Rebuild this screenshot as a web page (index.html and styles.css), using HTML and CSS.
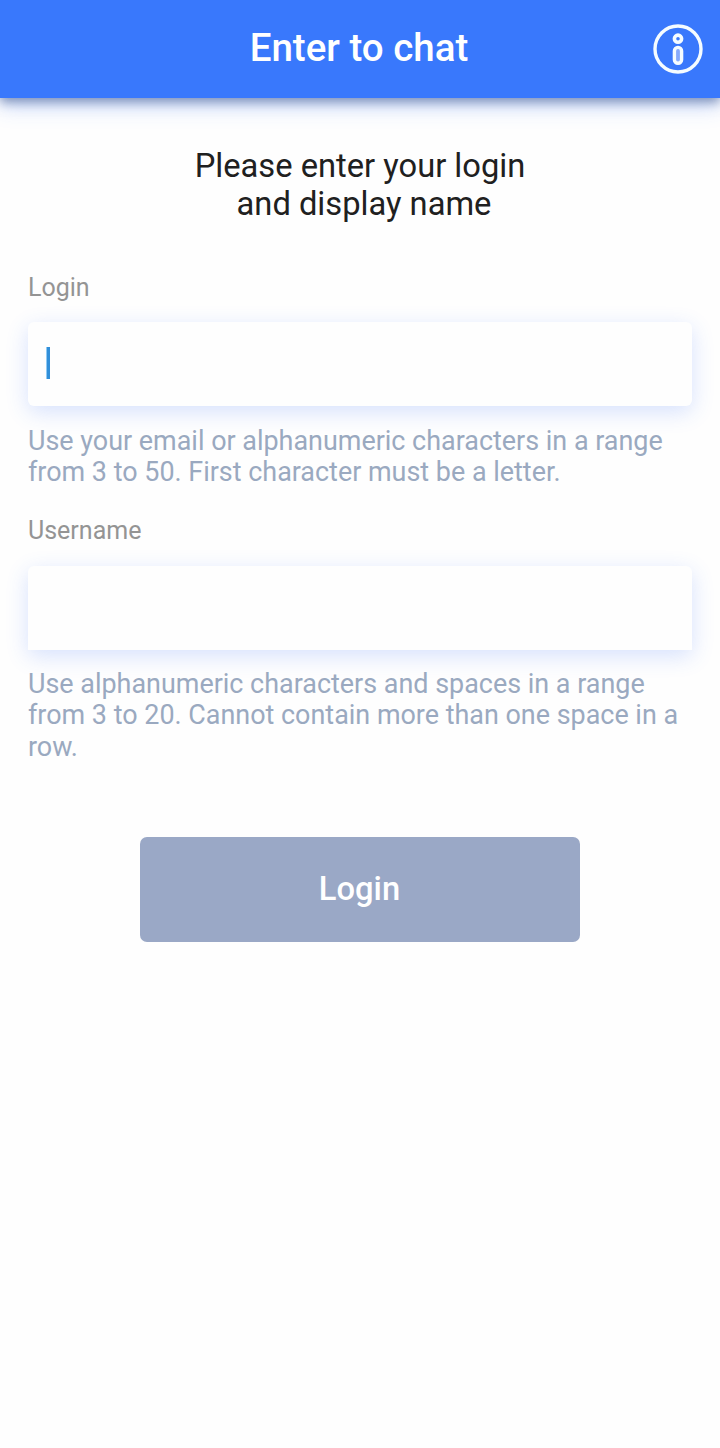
FILE: index.html
```html
<!DOCTYPE html>
<html lang="en">
<head>
<meta charset="utf-8">
<title>Enter to chat</title>
<link rel="stylesheet" href="styles.css">
</head>
<body>
<header class="bar">
  <h1 class="bar-title">Enter to chat</h1>
  <button class="info" aria-label="Info">
    <svg width="50" height="50" viewBox="0 0 50 50" fill="none" stroke="#f5fcff">
      <circle cx="25" cy="25" r="23" stroke-width="3.4"/>
      <circle cx="25" cy="14.7" r="3.6" stroke-width="3.6"/>
      <rect x="21.4" y="23.4" width="7.2" height="15.8" rx="3.5" stroke-width="3.4" fill="#86aafc"/>
    </svg>
  </button>
</header>
<main class="form">
  <p class="intro"><span>Please enter your login</span><span class="second">and display name</span></p>
  <div class="label">Login</div>
  <div class="field rounded"><span class="caret"></span></div>
  <p class="hint">Use your email or alphanumeric characters in a range<br>from 3 to 50. First character must be a letter.</p>
  <div class="label label-username">Username</div>
  <div class="field"></div>
  <p class="hint hint-username">Use alphanumeric characters and spaces in a range<br>from 3 to 20. Cannot contain more than one space in a<br>row.</p>
  <button class="submit">Login</button>
</main>
</body>
</html>
```
FILE: styles.css
```css
* { box-sizing: border-box; }
body { margin: 0; min-height: 1448px; background: #fefefe; font-family: Roboto, sans-serif; }
.bar { height: 98px; background: #3978fc; display: grid; grid-template-columns: 67px 1fr 67px; align-items: center; box-shadow: 0 4px 10px rgba(40, 65, 120, .5), 0 8px 20px rgba(57, 120, 252, .28); }
.bar-title { grid-column: 2; margin: 0 0 2px; padding-right: 2px; text-align: center; color: #fff; font-size: 38.5px; line-height: 46px; font-weight: 500; }
.info { grid-column: 3; padding: 0; border: 0; background: none; width: 50px; height: 50px; }
.info svg { display: block; }
.form { display: flex; flex-direction: column; padding: 49px 28px 0; }
.intro { margin: 0 0 50px; display: flex; flex-direction: column; align-items: center; color: #202020; font-size: 32.7px; line-height: 38px; }
.second { padding-left: 8px; }
.label { color: #949494; font-size: 25px; line-height: 30px; margin-bottom: 19px; }
.label-username { margin-bottom: 20px; }
.field { height: 84px; background: #fefefe; padding: 25px 18px; border-radius: 6px 6px 0 0; box-shadow: 0 6px 22px rgba(57, 110, 252, .2); }
.rounded { border-radius: 6px; }
.caret { display: block; width: 4px; height: 32px; background: #318fd9; border-left: 1px solid #90caf4; }
.hint { margin: 19.6px 0 27.6px; color: #9aa9c0; font-size: 26.93px; line-height: 31.4px; white-space: nowrap; }
.hint-username { margin: 19px 0 27px; }
.submit { align-self: center; width: 440px; height: 105.5px; margin-top: 46.4px; padding: 0 1px 0.6px 0; border: 0; border-radius: 7px; background: #9aa8c6; color: #fff; font: 500 32.7px/40px Roboto, sans-serif; }
```
